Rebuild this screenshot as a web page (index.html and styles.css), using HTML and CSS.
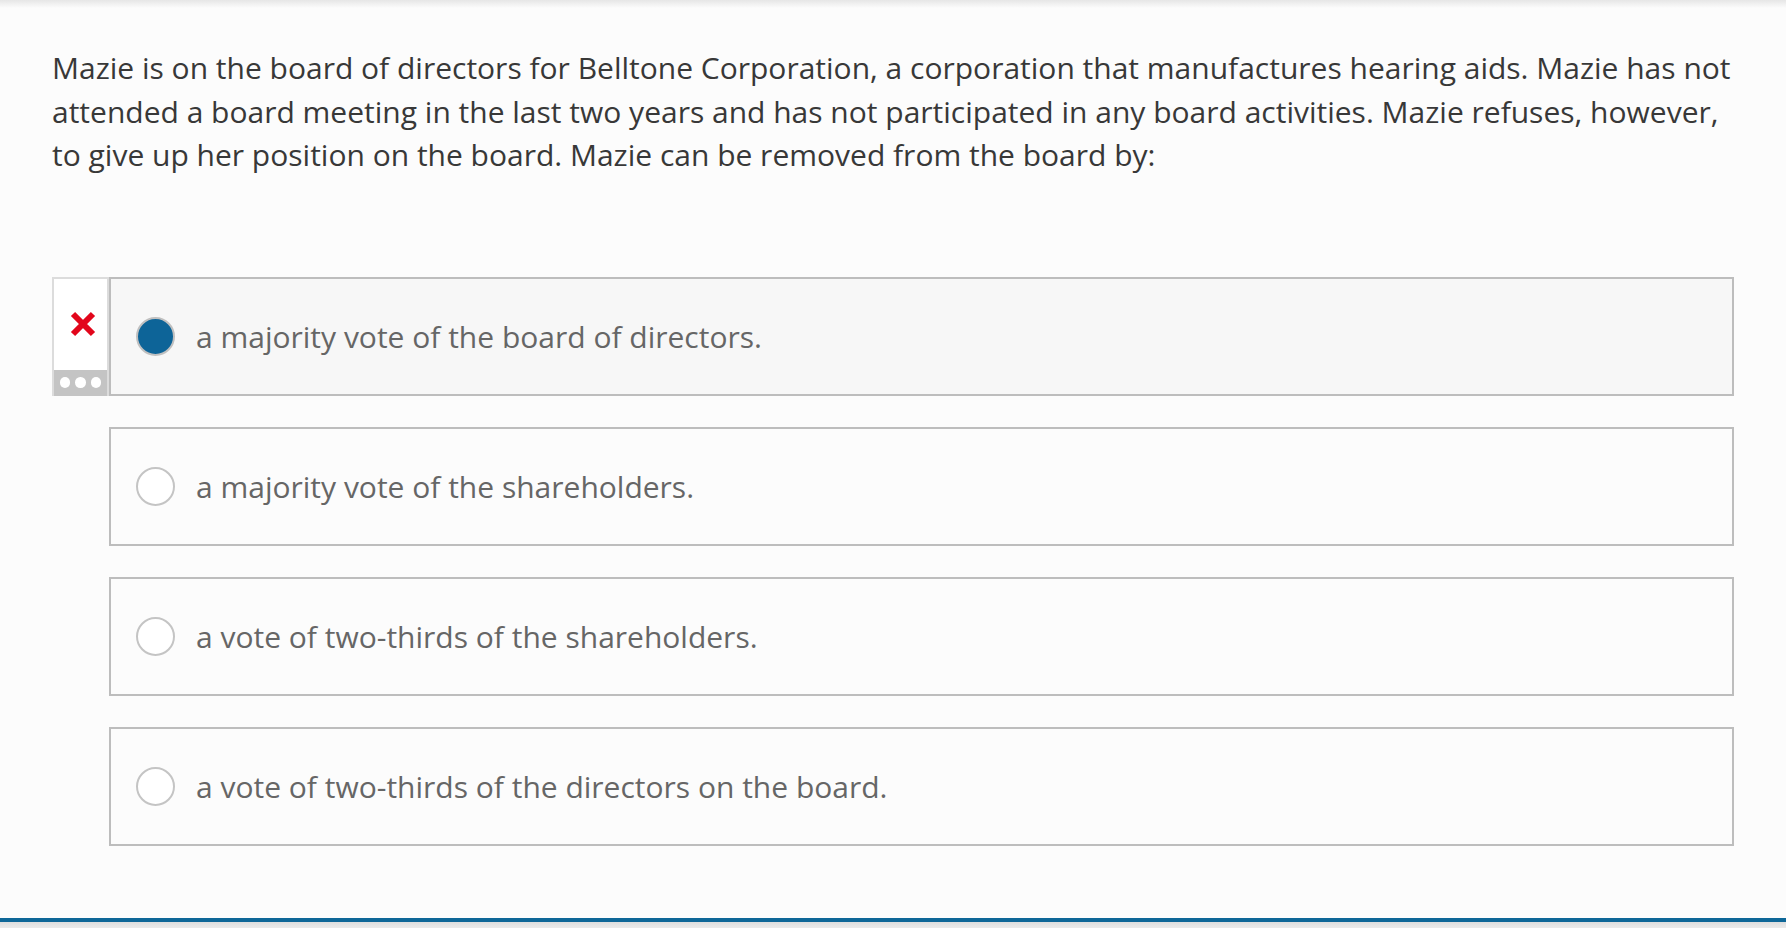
FILE: index.html
```html
<!DOCTYPE html>
<html lang="en">
<head>
<meta charset="utf-8">
<title>Question</title>
<link rel="stylesheet" href="styles.css">
</head>
<body>
<div class="page">
  <div class="top-shadow"></div>
  <main class="question">
    <p class="prompt">Mazie is on the board of directors for Belltone Corporation, a corporation that manufactures hearing aids. Mazie has not attended a board meeting in the last two years and has not participated in any board activities. Mazie refuses, however, to give up her position on the board. Mazie can be removed from the board by:</p>
    <div class="options">
      <div class="row">
        <div class="feedback">
          <div class="feedback-mark">
            <svg width="26" height="26" viewBox="0 0 26 26"><path d="M3 3 L23 23 M23 3 L3 23" stroke="#e2061b" stroke-width="6" stroke-linecap="butt"/></svg>
          </div>
          <div class="feedback-more"><span class="dot"></span><span class="dot"></span><span class="dot"></span></div>
        </div>
        <div class="option selected"><span class="radio"></span><span class="label">a majority vote of the board of directors.</span></div>
      </div>
      <div class="row">
        <div class="feedback empty"></div>
        <div class="option"><span class="radio"></span><span class="label">a majority vote of the shareholders.</span></div>
      </div>
      <div class="row">
        <div class="feedback empty"></div>
        <div class="option"><span class="radio"></span><span class="label">a vote of two-thirds of the shareholders.</span></div>
      </div>
      <div class="row">
        <div class="feedback empty"></div>
        <div class="option"><span class="radio"></span><span class="label">a vote of two-thirds of the directors on the board.</span></div>
      </div>
    </div>
  </main>
  <footer class="bottom-bar"></footer>
</div>
</body>
</html>
```
FILE: styles.css
```css
html, body {
  margin: 0;
  padding: 0;
  background: #fcfcfc;
}
body {
  font-family: "Open Sans", "Noto Sans", sans-serif;
}
.page {
  height: 928px;
  display: flex;
  flex-direction: column;
  overflow: hidden;
}
.top-shadow {
  height: 8px;
  background: linear-gradient(to bottom, #e6e6e6, #fcfcfc);
  flex: none;
}
.question {
  padding: 0 50px 0 52px;
}
.prompt {
  margin: 38px 0 0 0;
  font-size: 30px;
  line-height: 43.5px;
  color: #383838;
}
.options {
  margin-top: 100px;
  display: flex;
  flex-direction: column;
  gap: 31px;
  margin-right: 2px;
}
.row {
  display: flex;
  height: 119px;
}
.feedback {
  width: 57px;
  flex: none;
  box-sizing: border-box;
  display: flex;
  flex-direction: column;
}
.feedback:not(.empty) {
  border: 2px solid #dcdcdc;
  border-bottom: none;
  background: #fff;
}
.feedback-mark {
  flex: 1;
  display: flex;
  justify-content: center;
  align-items: center;
  padding-left: 4px;
}
.feedback-more {
  height: 26px;
  background: #c4c4c4;
  display: flex;
  justify-content: center;
  align-items: center;
  gap: 5px;
}
.dot {
  width: 10.5px;
  height: 10.5px;
  border-radius: 50%;
  background: #fff;
}
.option {
  flex: 1;
  box-sizing: border-box;
  border: 2px solid #bdbdbd;
  background: #fcfcfc;
  display: flex;
  align-items: center;
  padding-left: 25px;
}
.option.selected {
  background: #f7f7f7;
}
.radio {
  width: 39px;
  height: 39px;
  box-sizing: border-box;
  border-radius: 50%;
  border: 2px solid #c4c4c4;
  background: #fff;
  flex: none;
}
.selected .radio {
  background: #0d6498;
  border-color: #c0c0c0;
}
.label {
  margin-left: 21px;
  font-size: 30px;
  color: #666;
}
.bottom-bar {
  margin-top: auto;
  flex: none;
  border-top: 4px solid #0e6798;
  background: linear-gradient(to bottom, #dedede, #ebebeb);
  box-sizing: content-box;
  height: 6px;
}
```
